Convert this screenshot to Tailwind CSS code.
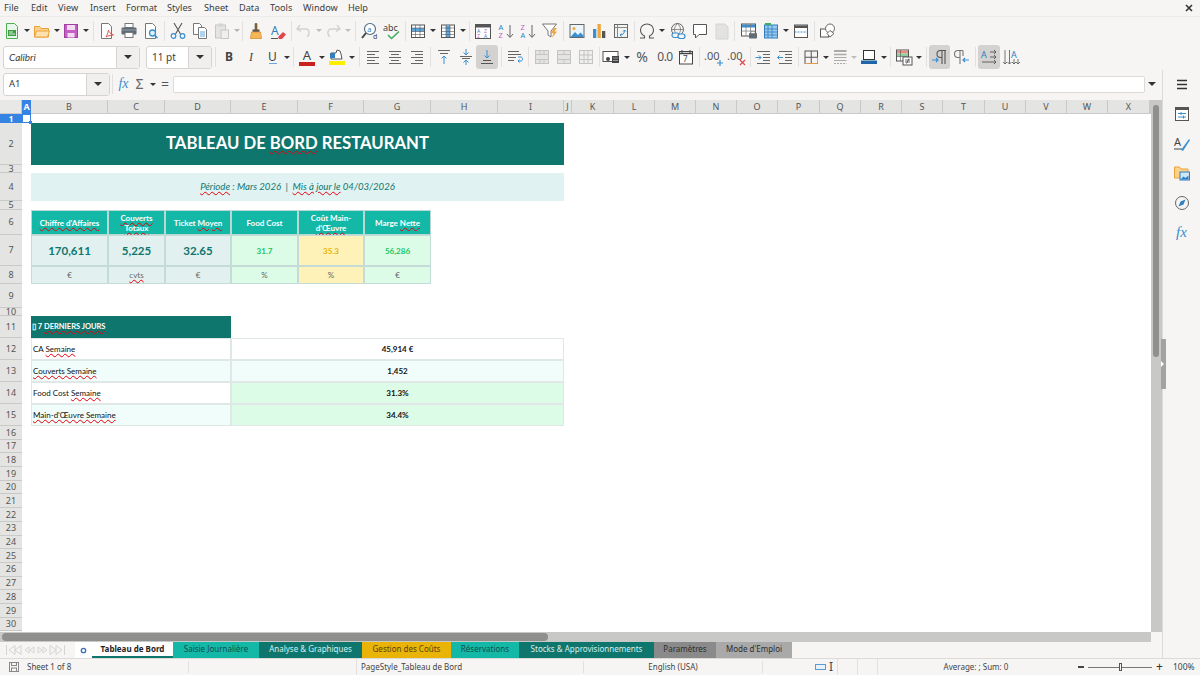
<!DOCTYPE html>
<html lang="en">
<head>
<meta charset="UTF-8">
<title>Tableau de Bord - Calc</title>
<script src="https://cdn.jsdelivr.net/npm/@tailwindcss/browser@4"></script>
</head>
<body class="m-0 overflow-hidden">
<div class="w-[1200px] h-[675px] flex flex-col overflow-hidden bg-[#f6f5f4] font-['Noto_Sans',sans-serif] text-[#3d3d3d]">

  <!-- menu -->
  <div class="h-[17px] flex items-center justify-between text-[9.2px] pl-[4px] pr-[7px] border-b border-[#ebebe9]">
    <div class="flex">
      <span class="w-[27px]">File</span><span class="w-[27px]">Edit</span><span class="w-[32px]">View</span><span class="w-[36px]">Insert</span><span class="w-[41px]">Format</span><span class="w-[37px]">Styles</span><span class="w-[35px]">Sheet</span><span class="w-[31px]">Data</span><span class="w-[33px]">Tools</span><span class="w-[45px]">Window</span><span>Help</span>
    </div>
    <svg class="w-[8px] h-[8px]" viewBox="0 0 8 8"><path d="M1 1l6 6M7 1l-6 6" stroke="#333" stroke-width="1.6"/></svg>
  </div>

  <!-- standard toolbar -->
  <div class="h-[27px] flex items-center pl-[1px]">
    <div class="w-[22px] flex justify-center"><svg class="w-[18px] h-[18px]" viewBox="0 0 18 18" fill="none"><path d="M3.500 1.500h8l3 3v12h-11z" fill="#e9f6ea" stroke="#4caf50"/><rect x="5" y="8" width="8" height="6" fill="#3f9e45"/><path d="M6 10h4M6 12h6" stroke="#fff" stroke-width=".8"/></svg></div>
    <div class="w-[8px] flex justify-center"><div class="border-x-[3px] border-t-[3px] border-x-transparent border-t-[#333]"></div></div>
    <div class="w-[22px] flex justify-center"><svg class="w-[18px] h-[18px]" viewBox="0 0 18 18" fill="none"><path d="M1.500 15V4.500h5l1.500 2h7.500V15z" fill="#fbd28c" stroke="#e9a23b"/><path d="M1.500 15l2-6h13l-2 6z" fill="#fde1ae" stroke="#e9a23b"/></svg></div>
    <div class="w-[7px] flex justify-center"><div class="border-x-[3px] border-t-[3px] border-x-transparent border-t-[#333]"></div></div>
    <div class="w-[22px] flex justify-center"><svg class="w-[18px] h-[18px]" viewBox="0 0 18 18" fill="none"><rect x="2.500" y="2.500" width="13" height="13" fill="#c55fc4" stroke="#a03fa0"/><rect x="5" y="3" width="8" height="5" fill="#f3dcf3"/><rect x="5.500" y="11" width="7" height="4.500" fill="#f3dcf3"/></svg></div>
    <div class="w-[8px] flex justify-center"><div class="border-x-[3px] border-t-[3px] border-x-transparent border-t-[#333]"></div></div>
    <div class="w-[6px] flex justify-center"><div class="w-px h-[20px] bg-[#e2e1df]"></div></div>
    <div class="w-[22px] flex justify-center"><svg class="w-[18px] h-[18px]" viewBox="0 0 18 18" fill="none"><path d="M3.500 1.500h7l3 3v12h-10z" fill="#fff" stroke="#777"/><path d="M8 15c2-3 2-6 2.500-7 .5 2 2 4 5 5-2 0-5 .5-7.500 2z" stroke="#e2574c"/></svg></div>
    <div class="w-[22px] flex justify-center"><svg class="w-[18px] h-[18px]" viewBox="0 0 18 18" fill="none"><rect x="5" y="1.500" width="8" height="4" fill="#fff" stroke="#777"/><rect x="1.500" y="5.500" width="15" height="7" rx="1" fill="#5f6b75"/><rect x="5" y="10.500" width="8" height="5" fill="#fff" stroke="#777"/><path d="M2 8h14" stroke="#8fa0ad"/></svg></div>
    <div class="w-[22px] flex justify-center"><svg class="w-[18px] h-[18px]" viewBox="0 0 18 18" fill="none"><path d="M3.500 1.500h7l3 3v12h-10z" fill="#fff" stroke="#777"/><circle cx="10.500" cy="11" r="3" fill="#dff0fb" stroke="#3a8fd0" stroke-width="1.300"/><path d="M12.500 13l3 3" stroke="#3a8fd0" stroke-width="1.500"/></svg></div>
    <div class="w-[5px] flex justify-center"><div class="w-px h-[20px] bg-[#e2e1df]"></div></div>
    <div class="w-[22px] flex justify-center"><svg class="w-[18px] h-[18px]" viewBox="0 0 18 18" fill="none"><path d="M5 1l6.500 11M13 1L6.500 12" stroke="#555" stroke-width="1.100"/><circle cx="4.500" cy="14" r="2.300" stroke="#3a8fd0" stroke-width="1.200"/><circle cx="13.500" cy="14" r="2.300" stroke="#3a8fd0" stroke-width="1.200"/></svg></div>
    <div class="w-[22px] flex justify-center"><svg class="w-[18px] h-[18px]" viewBox="0 0 18 18" fill="none"><path d="M2.500 1.500h6l2 2v9h-8z" fill="#fff" stroke="#777"/><path d="M7.500 5.500h6l2 2v9h-8z" fill="#fff" stroke="#777"/><path d="M9 10h5M9 12h5M9 14h5" stroke="#3a8fd0" stroke-width=".8"/></svg></div>
    <div class="w-[22px] flex justify-center"><svg class="w-[18px] h-[18px]" viewBox="0 0 18 18" fill="none"><rect x="2.500" y="3" width="10" height="13" fill="#e4e4e3" stroke="#c6c6c5"/><rect x="5" y="1.500" width="5" height="3" fill="#d4d4d3"/><rect x="8" y="8" width="7.500" height="8.500" fill="#efefee" stroke="#c6c6c5"/></svg></div>
    <div class="w-[7px] flex justify-center"><div class="border-x-[3px] border-t-[3px] border-x-transparent border-t-[#b5b5b5]"></div></div>
    <div class="w-[5px] flex justify-center"><div class="w-px h-[20px] bg-[#e2e1df]"></div></div>
    <div class="w-[22px] flex justify-center"><svg class="w-[18px] h-[18px]" viewBox="0 0 18 18" fill="none"><path d="M8 1.500h2V8H8z" fill="#8a6a3b" stroke="#6a5230" stroke-width=".6"/><rect x="5.500" y="7.500" width="7" height="2.500" fill="#555"/><path d="M4.500 10h9l1 6.500h-11z" fill="#f6b75a" stroke="#d98f2b" stroke-width=".8"/></svg></div>
    <div class="w-[22px] flex justify-center"><svg class="w-[18px] h-[18px]" viewBox="0 0 18 18" fill="none"><text x="2" y="13" font-size="12" fill="#2f7fc1" font-family="Noto Sans">A</text><path d="M9 15l5-5 3 2.500-4 4.500h-3z" fill="#e2464c"/><path d="M2 16.500h7" stroke="#555"/></svg></div>
    <div class="w-[4px] flex justify-center"><div class="w-px h-[20px] bg-[#e2e1df]"></div></div>
    <div class="w-[22px] flex justify-center"><svg class="w-[18px] h-[18px]" viewBox="0 0 18 18" fill="none"><path d="M5 3L2 7l4 2.500M2.500 7h8c4 0 5 5 1.500 8" stroke="#d2d2d1" stroke-width="1.400"/></svg></div>
    <div class="w-[7px] flex justify-center"><div class="border-x-[3px] border-t-[3px] border-x-transparent border-t-[#bdbdbd]"></div></div>
    <div class="w-[22px] flex justify-center"><svg class="w-[18px] h-[18px]" viewBox="0 0 18 18" fill="none"><path d="M13 3l3 4-4 2.500M15.500 7h-8c-4 0-5 5-1.500 8" stroke="#d2d2d1" stroke-width="1.400"/></svg></div>
    <div class="w-[7px] flex justify-center"><div class="border-x-[3px] border-t-[3px] border-x-transparent border-t-[#bdbdbd]"></div></div>
    <div class="w-[8px] flex justify-center"><div class="w-px h-[20px] bg-[#e2e1df]"></div></div>
    <div class="w-[22px] flex justify-center"><svg class="w-[18px] h-[18px]" viewBox="0 0 18 18" fill="none"><circle cx="9" cy="7" r="5.500" fill="#fff" stroke="#4a6a80" stroke-width="1.100"/><path d="M5 11l-4 5" stroke="#444" stroke-width="2"/><text x="6.300" y="9.500" font-size="7.500" fill="#2f7fc1" font-family="Noto Sans">a</text><text x="12" y="17" font-size="7" fill="#444" font-family="Noto Sans">d</text></svg></div>
    <div class="w-[22px] flex justify-center"><svg class="w-[18px] h-[18px]" viewBox="0 0 18 18" fill="none"><text x="0" y="9" font-size="9" fill="#444" font-family="Noto Sans">abc</text><path d="M5 13l3.500 3.500L16 9.500" stroke="#3fae5a" stroke-width="1.600"/></svg></div>
    <div class="w-[4px] flex justify-center"><div class="w-px h-[20px] bg-[#e2e1df]"></div></div>
    <div class="w-[22px] flex justify-center"><svg class="w-[18px] h-[18px]" viewBox="0 0 18 18" fill="none"><rect x="2.500" y="3" width="13" height="12.500" fill="#fff" stroke="#555"/><rect x="3" y="6" width="12" height="3.500" fill="#5aa8e0"/><path d="M2.500 6h13M2.500 9.500h13M2.500 12.500h13M6.500 3v12.500M11 3v12.500" stroke="#555" stroke-width=".6"/></svg></div>
    <div class="w-[8px] flex justify-center"><div class="border-x-[3px] border-t-[3px] border-x-transparent border-t-[#333]"></div></div>
    <div class="w-[22px] flex justify-center"><svg class="w-[18px] h-[18px]" viewBox="0 0 18 18" fill="none"><rect x="2.500" y="3" width="13" height="12.500" fill="#fff" stroke="#555"/><rect x="7" y="3.500" width="4" height="11.500" fill="#5aa8e0"/><path d="M2.500 6h13M2.500 9.500h13M2.500 12.500h13M7 3v12.500M11 3v12.500" stroke="#555" stroke-width=".6"/></svg></div>
    <div class="w-[8px] flex justify-center"><div class="border-x-[3px] border-t-[3px] border-x-transparent border-t-[#333]"></div></div>
    <div class="w-[5px] flex justify-center"><div class="w-px h-[20px] bg-[#e2e1df]"></div></div>
    <div class="w-[22px] flex justify-center"><svg class="w-[18px] h-[18px]" viewBox="0 0 18 18" fill="none"><rect x="1.500" y="2.500" width="15" height="14" fill="#fff" stroke="#555"/><rect x="2" y="3" width="14" height="2.500" fill="#555"/><text x="3" y="10.500" font-size="5" fill="#2f7fc1" font-family="Noto Sans">A</text><text x="10" y="10.500" font-size="5" fill="#c45fc4" font-family="Noto Sans">Z</text><text x="3" y="15.500" font-size="5" fill="#c45fc4" font-family="Noto Sans">Z</text><text x="10" y="15.500" font-size="5" fill="#2f7fc1" font-family="Noto Sans">A</text></svg></div>
    <div class="w-[22px] flex justify-center ml-[1px]"><svg class="w-[18px] h-[18px]" viewBox="0 0 18 18" fill="none"><text x="1.500" y="8" font-size="7.500" fill="#2f7fc1" font-family="Noto Sans">A</text><text x="1.500" y="16" font-size="7.500" fill="#c45fc4" font-family="Noto Sans">Z</text><path d="M13 3v12M10 12l3 3.500 3-3.500" stroke="#666"/></svg></div>
    <div class="w-[22px] flex justify-center"><svg class="w-[18px] h-[18px]" viewBox="0 0 18 18" fill="none"><text x="1.500" y="8" font-size="7.500" fill="#c45fc4" font-family="Noto Sans">Z</text><text x="1.500" y="16" font-size="7.500" fill="#2f7fc1" font-family="Noto Sans">A</text><path d="M13 3v12M10 12l3 3.500 3-3.500" stroke="#666"/></svg></div>
    <div class="w-[22px] flex justify-center"><svg class="w-[18px] h-[18px]" viewBox="0 0 18 18" fill="none"><path d="M1.500 2h14l-5.500 7v6l-3-2V9z" fill="#fff" stroke="#777"/><path d="M13 6l-3 5h2.500L11 16l5-6.500h-2.500L16 6z" fill="#f0a63b"/></svg></div>
    <div class="w-[5px] flex justify-center"><div class="w-px h-[20px] bg-[#e2e1df]"></div></div>
    <div class="w-[22px] flex justify-center"><svg class="w-[18px] h-[18px]" viewBox="0 0 18 18" fill="none"><rect x="2" y="2.500" width="14" height="13" fill="#eaf4fb" stroke="#666"/><circle cx="6" cy="6.500" r="1.500" fill="#f0a63b"/><path d="M2.500 15l4.500-5 3 3 2.500-2.500 3 3V15z" fill="#3a8fd0"/></svg></div>
    <div class="w-[22px] flex justify-center"><svg class="w-[18px] h-[18px]" viewBox="0 0 18 18" fill="none"><rect x="3" y="7" width="3.300" height="9" fill="#3a8fd0"/><rect x="7.500" y="2" width="3.300" height="14" fill="#f0a63b"/><rect x="12" y="9" width="3.300" height="7" fill="#555"/></svg></div>
    <div class="w-[22px] flex justify-center"><svg class="w-[18px] h-[18px]" viewBox="0 0 18 18" fill="none"><rect x="2.500" y="2.500" width="13" height="13" fill="#f3f3f2" stroke="#666"/><path d="M2.500 5.500h13M5.500 2.500v13" stroke="#888"/><path d="M8 13c3 0 4.500-1.500 4.500-5M11 9.500L12.500 8 14 9.500M9.500 11.500L8 13l1.500 1.500" stroke="#3a8fd0"/></svg></div>
    <div class="w-[4px] flex justify-center"><div class="w-px h-[20px] bg-[#e2e1df]"></div></div>
    <div class="w-[22px] flex justify-center"><svg class="w-[18px] h-[18px]" viewBox="0 0 18 18" fill="none"><path d="M2 16h4.500v-2C3.500 12.500 2.500 10.500 2.500 8c0-3.500 3-6 6.500-6s6.500 2.500 6.500 6c0 2.500-1 4.500-4 6v2H16" stroke="#555" stroke-width="1.100"/></svg></div>
    <div class="w-[8px] flex justify-center"><div class="border-x-[3px] border-t-[3px] border-x-transparent border-t-[#333]"></div></div>
    <div class="w-[22px] flex justify-center ml-[1px]"><svg class="w-[18px] h-[18px]" viewBox="0 0 18 18" fill="none"><circle cx="8.500" cy="7.500" r="6" stroke="#666"/><path d="M2.500 7.500h12M8.500 1.500c-4 4-4 8 0 12M8.500 1.500c4 4 4 8 0 12" stroke="#666" stroke-width=".7"/><rect x="3" y="11" width="7" height="4.500" rx="2.200" fill="#f6f5f4" stroke="#3a8fd0" stroke-width="1.200"/><rect x="9" y="12" width="7" height="4.500" rx="2.200" fill="#f6f5f4" stroke="#3a8fd0" stroke-width="1.200"/></svg></div>
    <div class="w-[22px] flex justify-center"><svg class="w-[18px] h-[18px]" viewBox="0 0 18 18" fill="none"><path d="M2.500 2.500h13v10H8l-3.500 3.500v-3.500h-2z" fill="#fff" stroke="#555"/></svg></div>
    <div class="w-[22px] flex justify-center"><svg class="w-[18px] h-[18px]" viewBox="0 0 18 18" fill="none"><path d="M3 2h9l3 3v12H3z" fill="#e2e2e1" stroke="#d4d4d3"/></svg></div>
    <div class="w-[3px] flex justify-center"><div class="w-px h-[20px] bg-[#e2e1df]"></div></div>
    <div class="w-[22px] flex justify-center ml-[2px]"><svg class="w-[18px] h-[18px]" viewBox="0 0 18 18" fill="none"><rect x="1.500" y="2" width="14" height="12" fill="#fff" stroke="#555"/><rect x="2" y="2.500" width="13" height="3" fill="#3a8fd0"/><path d="M1.500 9h14M6 2v12M10.500 2v12" stroke="#777" stroke-width=".7"/><rect x="9" y="11" width="8" height="5.500" rx="1" fill="#5f6b75"/><rect x="11" y="9.500" width="4" height="2" fill="#fff" stroke="#666" stroke-width=".5"/></svg></div>
    <div class="w-[22px] flex justify-center"><svg class="w-[18px] h-[18px]" viewBox="0 0 18 18" fill="none"><rect x="2.500" y="3" width="13" height="13" fill="#9ccbee" stroke="#2f7fc1"/><path d="M2.500 7h13M2.500 10h13M2.500 13h13M6 3v13M10 3v13" stroke="#2f7fc1" stroke-width=".8"/><rect x="3" y="1" width="6" height="2" fill="#3fae5a"/></svg></div>
    <div class="w-[8px] flex justify-center"><div class="border-x-[3px] border-t-[3px] border-x-transparent border-t-[#333]"></div></div>
    <div class="w-[22px] flex justify-center"><svg class="w-[18px] h-[18px]" viewBox="0 0 18 18" fill="none"><rect x="2.500" y="3" width="13" height="12.500" fill="#fff" stroke="#555"/><rect x="3" y="3.500" width="12" height="2.500" fill="#555"/><path d="M2.500 10h13" stroke="#3a8fd0" stroke-dasharray="2 1"/></svg></div>
    <div class="w-[4px] flex justify-center"><div class="w-px h-[20px] bg-[#e2e1df]"></div></div>
    <div class="w-[22px] flex justify-center ml-[1px]"><svg class="w-[18px] h-[18px]" viewBox="0 0 18 18" fill="none"><rect x="1.500" y="7" width="8" height="8" fill="#fff" stroke="#555"/><circle cx="11" cy="6.500" r="4.500" fill="#fff" stroke="#666"/><path d="M11 8.500l4 3-4 3.500-3-3.500z" fill="#fff" stroke="#666"/></svg></div>
  </div>

  <!-- formatting toolbar -->
  <div class="h-[26px] flex items-center pl-[3px]">
    <div class="w-[137px] h-[23px] flex bg-white border border-[#d5d4d2] rounded-[3px]">
      <div class="flex-1 flex items-center pl-[5px] text-[10px] italic font-['Lato',sans-serif]">Calibri</div>
      <div class="w-[23px] flex items-center justify-center bg-[#f0efed] border-l border-[#d5d4d2]"><div class="border-x-[4px] border-t-[4px] border-x-transparent border-t-[#333]"></div></div>
    </div>
    <div class="w-[66px] h-[23px] ml-[6px] flex bg-white border border-[#d5d4d2] rounded-[3px]">
      <div class="flex-1 flex items-center pl-[5px] text-[10px]">11 pt</div>
      <div class="w-[23px] flex items-center justify-center bg-[#f0efed] border-l border-[#d5d4d2]"><div class="border-x-[4px] border-t-[4px] border-x-transparent border-t-[#333]"></div></div>
    </div>
    <div class="w-[5px] ml-[1px] flex justify-center"><div class="w-px h-[20px] bg-[#e2e1df]"></div></div>
    <div class="w-[22px] text-center text-[12px] font-bold text-[#444]">B</div>
    <div class="w-[22px] text-center text-[12px] italic text-[#444] font-['Liberation_Serif',serif]">I</div>
    <div class="w-[21px] flex flex-col items-center text-[12px] leading-[13px] text-[#444]">U<div class="w-[8px] h-[1.500px] bg-[#6aa6d8]"></div></div>
    <div class="w-[8px] flex justify-center"><div class="border-x-[3px] border-t-[3px] border-x-transparent border-t-[#333]"></div></div>
    <div class="w-[5px] flex justify-center"><div class="w-px h-[20px] bg-[#e2e1df]"></div></div>
    <div class="w-[22px] flex flex-col items-center text-[13px] leading-[14px] text-[#444]">A<div class="w-[16px] h-[4px] bg-[#c9211e]"></div></div>
    <div class="w-[8px] flex justify-center"><div class="border-x-[3px] border-t-[3px] border-x-transparent border-t-[#333]"></div></div>
    <div class="w-[22px] flex justify-center"><svg class="w-[18px] h-[18px]" viewBox="0 0 18 18" fill="none"><path d="M3 11V5h5l1-3 3 1 1 3 1 5H8z" fill="#fff" stroke="#555"/><rect x="2" y="5" width="5" height="5" fill="#2f7fc1"/><rect x="1" y="13" width="16" height="4" fill="#ffee00"/></svg></div>
    <div class="w-[8px] flex justify-center"><div class="border-x-[3px] border-t-[3px] border-x-transparent border-t-[#333]"></div></div>
    <div class="w-[6px] flex justify-center"><div class="w-px h-[20px] bg-[#e2e1df]"></div></div>
    <div class="w-[22px] flex justify-center"><svg class="w-[18px] h-[18px]" viewBox="0 0 18 18" fill="none"><path d="M3 3.500h12M3 6.500h8M3 9.500h12M3 12.500h8M3 15.500h12" stroke="#666"/></svg></div>
    <div class="w-[22px] flex justify-center"><svg class="w-[18px] h-[18px]" viewBox="0 0 18 18" fill="none"><path d="M3 3.500h12M5 6.500h8M3 9.500h12M5 12.500h8M3 15.500h12" stroke="#666"/></svg></div>
    <div class="w-[22px] flex justify-center"><svg class="w-[18px] h-[18px]" viewBox="0 0 18 18" fill="none"><path d="M3 3.500h12M7 6.500h8M3 9.500h12M7 12.500h8M3 15.500h12" stroke="#666"/></svg></div>
    <div class="w-[5px] flex justify-center"><div class="w-px h-[20px] bg-[#e2e1df]"></div></div>
    <div class="w-[22px] flex justify-center"><svg class="w-[18px] h-[18px]" viewBox="0 0 18 18" fill="none"><path d="M3 2.500h12M5 5.500h8" stroke="#666"/><path d="M9 16V8M6.500 10.500L9 8l2.500 2.500" stroke="#3a8fd0"/></svg></div>
    <div class="w-[21px] flex justify-center"><svg class="w-[18px] h-[18px]" viewBox="0 0 18 18" fill="none"><path d="M3 8.500h12M5 10.500h8" stroke="#666"/><path d="M9 1v6M6.500 4.500L9 7l2.500-2.500M9 17v-5M6.500 14.500L9 12l2.500 2.500" stroke="#3a8fd0"/></svg></div>
    <div class="w-[22px] h-[24px] flex items-center justify-center bg-[#d3d2d0] rounded-[3px]"><svg class="w-[18px] h-[18px]" viewBox="0 0 18 18" fill="none"><path d="M3 15.500h12M5 12.500h8" stroke="#555"/><path d="M9 2v8M6.500 7.500L9 10l2.500-2.500" stroke="#3a8fd0"/></svg></div>
    <div class="w-[5px] ml-[1px] flex justify-center"><div class="w-px h-[20px] bg-[#e2e1df]"></div></div>
    <div class="w-[22px] flex justify-center"><svg class="w-[18px] h-[18px]" viewBox="0 0 18 18" fill="none"><path d="M2 3.500h11M2 6.500h13M2 9.500h8M2 12.500h6" stroke="#666"/><path d="M12 9h3c2 0 2 4 0 4h-3M13.500 11.500L12 13l1.500 1.500" stroke="#3a8fd0"/></svg></div>
    <div class="w-[5px] flex justify-center"><div class="w-px h-[20px] bg-[#e2e1df]"></div></div>
    <div class="w-[22px] flex justify-center"><svg class="w-[18px] h-[18px]" viewBox="0 0 18 18" fill="#e4e4e3" stroke="#c4c4c3"><rect x="2.500" y="2.500" width="13" height="13"/><path d="M2.500 6.500h13M2.500 11.500h13M7 2.500v4M11 2.500v4M7 11.500v4M11 11.500v4"/></svg></div>
    <div class="w-[22px] flex justify-center"><svg class="w-[18px] h-[18px]" viewBox="0 0 18 18" fill="#e4e4e3" stroke="#c4c4c3"><rect x="2.500" y="2.500" width="13" height="13"/><path d="M2.500 6.500h13M2.500 11.500h13M9 2.500v4M9 11.500v4"/></svg></div>
    <div class="w-[22px] flex justify-center"><svg class="w-[18px] h-[18px]" viewBox="0 0 18 18" fill="#efefee" stroke="#c4c4c3"><rect x="2.500" y="2.500" width="13" height="13"/><path d="M2.500 7h13M2.500 11.500h13M7 2.500v13M11 2.500v13"/></svg></div>
    <div class="w-[5px] flex justify-center"><div class="w-px h-[20px] bg-[#e2e1df]"></div></div>
    <div class="w-[20px] flex justify-center"><svg class="w-[20px] h-[18px]" viewBox="0 0 20 18" fill="none"><rect x="1" y="3.500" width="15" height="10" fill="#fff" stroke="#555"/><circle cx="6" cy="11" r="2" fill="#444"/><rect x="10" y="8" width="7" height="7" fill="#444"/><path d="M11 10h5M11 12.500h5" stroke="#bbb" stroke-width=".7"/></svg></div>
    <div class="w-[8px] ml-[1px] flex justify-center"><div class="border-x-[3px] border-t-[3px] border-x-transparent border-t-[#333]"></div></div>
    <div class="w-[22px] text-center text-[14px] leading-[18px] text-[#555]">%</div>
    <div class="w-[22px] ml-[1px] text-center text-[12px] leading-[18px] text-[#555] tracking-[-0.5px]">0.0</div>
    <div class="w-[20px] flex justify-center"><svg class="w-[18px] h-[18px]" viewBox="0 0 18 18" fill="none"><rect x="2.500" y="3.500" width="13" height="12.500" fill="#fff" stroke="#444"/><path d="M2.500 5.500h13" stroke="#444" stroke-width="1.500"/><path d="M5 2v3M13 2v3" stroke="#444"/><text x="6" y="14" font-size="8" fill="#444" font-family="Noto Sans">7</text></svg></div>
    <div class="w-[6px] flex justify-center"><div class="w-px h-[20px] bg-[#e2e1df]"></div></div>
    <div class="w-[23px] flex justify-center"><svg class="w-[20px] h-[18px]" viewBox="0 0 20 18" fill="none"><text x="0" y="12" font-size="11" fill="#555" font-family="Noto Sans">.00</text><path d="M13 15h6M16 12v6" stroke="#3a8fd0" stroke-width="1.200"/></svg></div>
    <div class="w-[23px] flex justify-center"><svg class="w-[20px] h-[18px]" viewBox="0 0 20 18" fill="none"><text x="0" y="12" font-size="11" fill="#555" font-family="Noto Sans">.00</text><path d="M13 12l5 5M18 12l-5 5" stroke="#e2464c" stroke-width="1.200"/></svg></div>
    <div class="w-[4px] flex justify-center"><div class="w-px h-[20px] bg-[#e2e1df]"></div></div>
    <div class="w-[22px] flex justify-center"><svg class="w-[18px] h-[18px]" viewBox="0 0 18 18" fill="none"><path d="M3 3.500h13M9 6.500h7M9 9.500h7M9 12.500h7M3 15.500h13" stroke="#666"/><path d="M1.500 9.500H7M5 7.500l2 2-2 2" stroke="#3a8fd0"/></svg></div>
    <div class="w-[22px] flex justify-center"><svg class="w-[18px] h-[18px]" viewBox="0 0 18 18" fill="none"><path d="M3 3.500h13M9 6.500h7M9 9.500h7M9 12.500h7M3 15.500h13" stroke="#666"/><path d="M7 9.500H1.500M3.500 7.500l-2 2 2 2" stroke="#3a8fd0"/></svg></div>
    <div class="w-[4px] flex justify-center"><div class="w-px h-[20px] bg-[#e2e1df]"></div></div>
    <div class="w-[22px] flex justify-center"><svg class="w-[18px] h-[18px]" viewBox="0 0 18 18" fill="none"><rect x="3" y="3" width="12.500" height="12.500" stroke="#555"/><path d="M9.250 3v12.500M3 9.250h12.500" stroke="#555"/><path d="M3 15.500h12.500v-6" stroke="#e39a4a"/></svg></div>
    <div class="w-[8px] flex justify-center"><div class="border-x-[3px] border-t-[3px] border-x-transparent border-t-[#333]"></div></div>
    <div class="w-[20px] flex justify-center"><svg class="w-[18px] h-[18px]" viewBox="0 0 18 18" fill="none"><path d="M3 3h12.500" stroke="#aaa" stroke-width="2"/><path d="M3 6.500h12.500" stroke="#aaa" stroke-width="1.500"/><path d="M3 9.500h12.500M3 12.500h12.500" stroke="#aaa"/><path d="M3 15.500h12.500" stroke="#aaa" stroke-dasharray="2 1"/></svg></div>
    <div class="w-[8px] flex justify-center"><div class="border-x-[3px] border-t-[3px] border-x-transparent border-t-[#bdbdbd]"></div></div>
    <div class="w-[22px] flex justify-center"><svg class="w-[18px] h-[18px]" viewBox="0 0 18 18" fill="none"><rect x="3.500" y="2.500" width="11" height="9" fill="#fff" stroke="#333"/><path d="M1 12.500h16v3.500H1z" fill="#1f66a8"/></svg></div>
    <div class="w-[8px] flex justify-center"><div class="border-x-[3px] border-t-[3px] border-x-transparent border-t-[#333]"></div></div>
    <div class="w-[5px] flex justify-center"><div class="w-px h-[20px] bg-[#e2e1df]"></div></div>
    <div class="w-[22px] flex justify-center"><svg class="w-[18px] h-[18px]" viewBox="0 0 18 18" fill="none"><rect x="1.500" y="2" width="12" height="11" fill="#fff" stroke="#555"/><rect x="2" y="2.500" width="11" height="3" fill="#e98a80"/><rect x="2" y="5.500" width="11" height="3" fill="#8fd19e"/><path d="M1.500 8.500h12M5.500 2v11" stroke="#555" stroke-width=".6"/><rect x="8" y="9" width="9" height="8" fill="#fff" stroke="#555"/><path d="M10 12h5M10 14h5M14 10.500l-2.500 5" stroke="#444" stroke-width=".8"/></svg></div>
    <div class="w-[8px] flex justify-center"><div class="border-x-[3px] border-t-[3px] border-x-transparent border-t-[#333]"></div></div>
    <div class="w-[6px] flex justify-center"><div class="w-px h-[20px] bg-[#e2e1df]"></div></div>
    <div class="w-[21px] h-[24px] flex items-center justify-center bg-[#d3d2d0] rounded-[3px]"><svg class="w-[18px] h-[18px]" viewBox="0 0 18 18" fill="none"><path d="M15 2.500H9.500a3.500 3.500 0 0 0 0 7H11M11 2.500V16M14 2.500V16" stroke="#555" stroke-width="1.100"/><path d="M1 12h6M5 10l2 2-2 2" stroke="#3a8fd0" stroke-width="1.200"/></svg></div>
    <div class="w-[22px] flex justify-center"><svg class="w-[18px] h-[18px]" viewBox="0 0 18 18" fill="none"><path d="M11 2.500H6a3.500 3.500 0 0 0 0 7h2M8 2.500V16M11 2.500V8" stroke="#777" stroke-width="1.100"/><path d="M17 12h-6M13 10l-2 2 2 2" stroke="#3a8fd0" stroke-width="1.200"/></svg></div>
    <div class="w-[6px] flex justify-center"><div class="w-px h-[20px] bg-[#e2e1df]"></div></div>
    <div class="w-[22px] h-[24px] flex items-center justify-center bg-[#d3d2d0] rounded-[3px]"><svg class="w-[18px] h-[18px]" viewBox="0 0 18 18" fill="none"><text x="1" y="10" font-size="9" fill="#2f7fc1" font-family="Noto Sans">A</text><path d="M10 4h6M14 2l2 2-2 2M10 9h6M14 7l2 2-2 2M2 14h14M14 12l2 2-2 2" stroke="#555" stroke-width=".9"/></svg></div>
    <div class="w-[22px] flex justify-center"><svg class="w-[18px] h-[18px]" viewBox="0 0 18 18" fill="none"><text x="9" y="10" font-size="9" fill="#2f7fc1" font-family="Noto Sans">A</text><path d="M3 2v14M1 14l2 2 2-2M7.500 2v14M5.500 14l2 2 2-2M12 11v5M10 14l2 2 2-2M16 11v5M14 14l2 2 2-2" stroke="#555" stroke-width=".8"/></svg></div>
  </div>

  <!-- middle: formula bar + sheet + tabs, deck on the right -->
  <div class="h-[588px] flex">
    <div class="w-[1162px] flex flex-col">
      <!-- formula bar -->
      <div class="h-[30px] flex items-center pl-[3px] pb-[2px]">
        <div class="w-[107px] h-[23px] flex bg-white border border-[#d5d4d2] rounded-[3px]">
          <div class="flex-1 flex items-center pl-[5px] text-[9.500px]">A1</div>
          <div class="w-[23px] flex items-center justify-center bg-[#f0efed] border-l border-[#d5d4d2]"><div class="border-x-[4px] border-t-[4px] border-x-transparent border-t-[#333]"></div></div>
        </div>
        <div class="w-[4px] flex justify-center"><div class="w-px h-[20px] bg-[#e2e1df]"></div></div>
        <div class="w-[17px] ml-[1px] text-center text-[14px] leading-[18px] italic text-[#3a8fd0] font-['Liberation_Serif',serif]">fx</div>
        <div class="w-[15px] text-center text-[14px] leading-[18px] text-[#666]">Σ</div>
        <div class="w-[11px] flex justify-center"><div class="border-x-[3px] border-t-[3px] border-x-transparent border-t-[#333]"></div></div>
        <div class="w-[14px] text-center text-[14px] leading-[18px] text-[#555]">=</div>
        <div class="w-[972px] h-[17px] ml-[1px] bg-white border border-[#dcdbd9] rounded-[2px]"></div>
        <div class="w-[14px] flex justify-center"><div class="border-x-[4px] border-t-[4px] border-x-transparent border-t-[#333]"></div></div>
      </div>

      <!-- column headers -->
      <div class="h-[14px] flex text-[9px] leading-[13px] text-[#555] text-center">
        <div class="w-[22px] bg-[#e8e8e6] border-r border-b border-[#c9c9c7]"></div>
        <div class="w-[9px] bg-[#3584e4] text-white font-bold">A</div>
        <div class="w-[77px] bg-[#e4e4e2] border-r border-b border-[#c9c9c7]">B</div>
        <div class="w-[57px] bg-[#e4e4e2] border-r border-b border-[#c9c9c7]">C</div>
        <div class="w-[66px] bg-[#e4e4e2] border-r border-b border-[#c9c9c7]">D</div>
        <div class="w-[67px] bg-[#e4e4e2] border-r border-b border-[#c9c9c7]">E</div>
        <div class="w-[66px] bg-[#e4e4e2] border-r border-b border-[#c9c9c7]">F</div>
        <div class="w-[67px] bg-[#e4e4e2] border-r border-b border-[#c9c9c7]">G</div>
        <div class="w-[67px] bg-[#e4e4e2] border-r border-b border-[#c9c9c7]">H</div>
        <div class="w-[66px] bg-[#e4e4e2] border-r border-b border-[#c9c9c7]">I</div>
        <div class="w-[8px] bg-[#e4e4e2] border-r border-b border-[#c9c9c7]">J</div>
        <div class="w-[42px] bg-[#e4e4e2] border-r border-b border-[#c9c9c7]">K</div>
        <div class="w-[41px] bg-[#e4e4e2] border-r border-b border-[#c9c9c7]">L</div>
        <div class="w-[41px] bg-[#e4e4e2] border-r border-b border-[#c9c9c7]">M</div>
        <div class="w-[41px] bg-[#e4e4e2] border-r border-b border-[#c9c9c7]">N</div>
        <div class="w-[41px] bg-[#e4e4e2] border-r border-b border-[#c9c9c7]">O</div>
        <div class="w-[42px] bg-[#e4e4e2] border-r border-b border-[#c9c9c7]">P</div>
        <div class="w-[41px] bg-[#e4e4e2] border-r border-b border-[#c9c9c7]">Q</div>
        <div class="w-[41px] bg-[#e4e4e2] border-r border-b border-[#c9c9c7]">R</div>
        <div class="w-[41px] bg-[#e4e4e2] border-r border-b border-[#c9c9c7]">S</div>
        <div class="w-[42px] bg-[#e4e4e2] border-r border-b border-[#c9c9c7]">T</div>
        <div class="w-[41px] bg-[#e4e4e2] border-r border-b border-[#c9c9c7]">U</div>
        <div class="w-[41px] bg-[#e4e4e2] border-r border-b border-[#c9c9c7]">V</div>
        <div class="w-[41px] bg-[#e4e4e2] border-r border-b border-[#c9c9c7]">W</div>
        <div class="w-[42px] bg-[#e4e4e2] border-r border-b border-[#c9c9c7]">X</div>
        <div class="w-[12px] bg-[#c8c8c7]"></div>
      </div>

      <div class="h-[518px] flex">
        <!-- row headers -->
        <div class="w-[22px] flex flex-col text-[9px] text-[#555] text-center overflow-hidden">
          <div class="h-[9px] flex items-center justify-center bg-[#3584e4] text-white font-bold text-[8px]">1</div>
          <div class="h-[42px] flex items-center justify-center bg-[#e4e4e2] border-b border-[#c9c9c7]">2</div>
          <div class="h-[8px] flex items-center justify-center bg-[#e4e4e2] border-b border-[#c9c9c7]">3</div>
          <div class="h-[28px] flex items-center justify-center bg-[#e4e4e2] border-b border-[#c9c9c7]">4</div>
          <div class="h-[9px] flex items-center justify-center bg-[#e4e4e2] border-b border-[#c9c9c7]">5</div>
          <div class="h-[25px] flex items-center justify-center bg-[#e4e4e2] border-b border-[#c9c9c7]">6</div>
          <div class="h-[31px] flex items-center justify-center bg-[#e4e4e2] border-b border-[#c9c9c7]">7</div>
          <div class="h-[18px] flex items-center justify-center bg-[#e4e4e2] border-b border-[#c9c9c7]">8</div>
          <div class="h-[24px] flex items-center justify-center bg-[#e4e4e2] border-b border-[#c9c9c7]">9</div>
          <div class="h-[8px] flex items-center justify-center bg-[#e4e4e2] border-b border-[#c9c9c7]">10</div>
          <div class="h-[22px] flex items-center justify-center bg-[#e4e4e2] border-b border-[#c9c9c7]">11</div>
          <div class="h-[22px] flex items-center justify-center bg-[#e4e4e2] border-b border-[#c9c9c7]">12</div>
          <div class="h-[22px] flex items-center justify-center bg-[#e4e4e2] border-b border-[#c9c9c7]">13</div>
          <div class="h-[22px] flex items-center justify-center bg-[#e4e4e2] border-b border-[#c9c9c7]">14</div>
          <div class="h-[22px] flex items-center justify-center bg-[#e4e4e2] border-b border-[#c9c9c7]">15</div>
          <div class="h-[13.700px] flex items-center justify-center bg-[#e4e4e2] border-b border-[#c9c9c7]">16</div>
          <div class="h-[13.700px] flex items-center justify-center bg-[#e4e4e2] border-b border-[#c9c9c7]">17</div>
          <div class="h-[13.700px] flex items-center justify-center bg-[#e4e4e2] border-b border-[#c9c9c7]">18</div>
          <div class="h-[13.700px] flex items-center justify-center bg-[#e4e4e2] border-b border-[#c9c9c7]">19</div>
          <div class="h-[13.700px] flex items-center justify-center bg-[#e4e4e2] border-b border-[#c9c9c7]">20</div>
          <div class="h-[13.700px] flex items-center justify-center bg-[#e4e4e2] border-b border-[#c9c9c7]">21</div>
          <div class="h-[13.700px] flex items-center justify-center bg-[#e4e4e2] border-b border-[#c9c9c7]">22</div>
          <div class="h-[13.700px] flex items-center justify-center bg-[#e4e4e2] border-b border-[#c9c9c7]">23</div>
          <div class="h-[13.700px] flex items-center justify-center bg-[#e4e4e2] border-b border-[#c9c9c7]">24</div>
          <div class="h-[13.700px] flex items-center justify-center bg-[#e4e4e2] border-b border-[#c9c9c7]">25</div>
          <div class="h-[13.700px] flex items-center justify-center bg-[#e4e4e2] border-b border-[#c9c9c7]">26</div>
          <div class="h-[13.700px] flex items-center justify-center bg-[#e4e4e2] border-b border-[#c9c9c7]">27</div>
          <div class="h-[13.700px] flex items-center justify-center bg-[#e4e4e2] border-b border-[#c9c9c7]">28</div>
          <div class="h-[13.700px] flex items-center justify-center bg-[#e4e4e2] border-b border-[#c9c9c7]">29</div>
          <div class="h-[13.700px] flex items-center justify-center bg-[#e4e4e2] border-b border-[#c9c9c7]">30</div>
        </div>

        <!-- cells -->
        <div class="w-[1129px] bg-white relative font-['Lato',sans-serif]">
          <div class="absolute left-0 top-0 w-[9px] h-[9px] border border-[#3584e4]"><div class="absolute right-[-2px] bottom-[-2px] w-[3px] h-[3px] bg-[#3584e4]"></div></div>
          <div class="grid grid-cols-[9px_77px_57px_66px_67px_66px_67px_67px_66px] grid-rows-[9px_42px_8px_28px_9px_25px_31px_18px_24px_8px_22px_22px_22px_22px_22px]">
            <div class="col-start-2 col-span-8 row-start-2 flex items-center justify-center bg-[#0f766e] text-white font-bold text-[16.7px]"><span>TABLEAU DE <span class="underline underline-offset-[1px] decoration-wavy decoration-red-600 decoration-1">BORD</span> RESTAURANT</span></div>
            <div class="col-start-2 col-span-8 row-start-4 flex items-center justify-center bg-[#e0f2f1] text-[#0f766e] italic text-[9.6px] whitespace-pre"><span><span class="underline underline-offset-[1px] decoration-wavy decoration-red-600 decoration-1">Période</span> : Mars 2026  |  <span class="underline underline-offset-[1px] decoration-wavy decoration-red-600 decoration-1">Mis à jour le</span> 04/03/2026</span></div>

            <div class="col-start-2 row-start-6 flex items-center justify-center text-center bg-[#14b8a6] text-white font-bold text-[8px] leading-[10px] border border-[#b8d8d4]"><span class="underline underline-offset-[1px] decoration-wavy decoration-red-600 decoration-1">Chiffre d'Affaires</span></div>
            <div class="col-start-3 row-start-6 flex items-center justify-center text-center bg-[#14b8a6] text-white font-bold text-[8px] leading-[10px] border border-[#b8d8d4] px-[6px]"><span class="underline underline-offset-[1px] decoration-wavy decoration-red-600 decoration-1">Couverts Totaux</span></div>
            <div class="col-start-4 row-start-6 flex items-center justify-center text-center bg-[#14b8a6] text-white font-bold text-[8px] leading-[10px] border border-[#b8d8d4]"><span>Ticket <span class="underline underline-offset-[1px] decoration-wavy decoration-red-600 decoration-1">Moyen</span></span></div>
            <div class="col-start-5 row-start-6 flex items-center justify-center text-center bg-[#14b8a6] text-white font-bold text-[8px] leading-[10px] border border-[#b8d8d4]">Food Cost</div>
            <div class="col-start-6 row-start-6 flex items-center justify-center text-center bg-[#14b8a6] text-white font-bold text-[8px] leading-[10px] border border-[#b8d8d4]"><span>Coût Main-<br><span class="underline underline-offset-[1px] decoration-wavy decoration-red-600 decoration-1">d'Œuvre</span></span></div>
            <div class="col-start-7 row-start-6 flex items-center justify-center text-center bg-[#14b8a6] text-white font-bold text-[8px] leading-[10px] border border-[#b8d8d4]"><span>Marge <span class="underline underline-offset-[1px] decoration-wavy decoration-red-600 decoration-1">Nette</span></span></div>

            <div class="col-start-2 row-start-7 flex items-center justify-center bg-[#e2f1ef] text-[#0f766e] font-bold text-[11.500px] border border-[#c4dbd8]">170,611</div>
            <div class="col-start-3 row-start-7 flex items-center justify-center bg-[#e2f1ef] text-[#0f766e] font-bold text-[11.500px] border border-[#c4dbd8]">5,225</div>
            <div class="col-start-4 row-start-7 flex items-center justify-center bg-[#e2f1ef] text-[#0f766e] font-bold text-[11.500px] border border-[#c4dbd8]">32.65</div>
            <div class="col-start-5 row-start-7 flex items-center justify-center bg-[#dcfce7] text-[#22c55e] font-bold text-[8px] border border-[#c4dbd8]">31.7</div>
            <div class="col-start-6 row-start-7 flex items-center justify-center bg-[#fef2b8] text-[#eab308] font-bold text-[8px] border border-[#c4dbd8]">35.3</div>
            <div class="col-start-7 row-start-7 flex items-center justify-center bg-[#dcfce7] text-[#22c55e] font-bold text-[8px] border border-[#c4dbd8]">56,286</div>

            <div class="col-start-2 row-start-8 flex items-center justify-center bg-[#e2f1ef] text-[#666] text-[8px] border border-[#c4dbd8]">€</div>
            <div class="col-start-3 row-start-8 flex items-center justify-center bg-[#e2f1ef] text-[#666] text-[8px] border border-[#c4dbd8]"><span class="underline underline-offset-[1px] decoration-wavy decoration-red-600 decoration-1">cvts</span></div>
            <div class="col-start-4 row-start-8 flex items-center justify-center bg-[#e2f1ef] text-[#666] text-[8px] border border-[#c4dbd8]">€</div>
            <div class="col-start-5 row-start-8 flex items-center justify-center bg-[#dcfce7] text-[#666] text-[8px] border border-[#c4dbd8]">%</div>
            <div class="col-start-6 row-start-8 flex items-center justify-center bg-[#fef2b8] text-[#666] text-[8px] border border-[#c4dbd8]">%</div>
            <div class="col-start-7 row-start-8 flex items-center justify-center bg-[#dcfce7] text-[#666] text-[8px] border border-[#c4dbd8]">€</div>

            <div class="col-start-2 col-span-3 row-start-11 flex items-center pl-[1px] bg-[#0f766e] text-white font-bold text-[7.5px]"><span>▯ 7 <span class="underline underline-offset-[1px] decoration-wavy decoration-red-600 decoration-1">DERNIERS JOURS</span></span></div>

            <div class="col-start-2 col-span-3 row-start-12 flex items-center pl-[1px] bg-white text-[#111] text-[8px] border border-[#dfe8e6]"><span>CA <span class="underline underline-offset-[1px] decoration-wavy decoration-red-600 decoration-1">Semaine</span></span></div>
            <div class="col-start-5 col-span-5 row-start-12 flex items-center justify-center bg-white text-[#111] font-bold text-[8px] border border-[#dfe8e6]">45,914 €</div>
            <div class="col-start-2 col-span-3 row-start-13 flex items-center pl-[1px] bg-[#f0fdfa] text-[#111] text-[8px] border border-[#dfe8e6]"><span class="underline underline-offset-[1px] decoration-wavy decoration-red-600 decoration-1">Couverts Semaine</span></div>
            <div class="col-start-5 col-span-5 row-start-13 flex items-center justify-center bg-[#f0fdfa] text-[#111] font-bold text-[8px] border border-[#dfe8e6]">1,452</div>
            <div class="col-start-2 col-span-3 row-start-14 flex items-center pl-[1px] bg-white text-[#111] text-[8px] border border-[#dfe8e6]"><span>Food Cost <span class="underline underline-offset-[1px] decoration-wavy decoration-red-600 decoration-1">Semaine</span></span></div>
            <div class="col-start-5 col-span-5 row-start-14 flex items-center justify-center bg-[#dcfce7] text-[#111] font-bold text-[8px] border border-[#dfe8e6]">31.3%</div>
            <div class="col-start-2 col-span-3 row-start-15 flex items-center pl-[1px] bg-[#f0fdfa] text-[#111] text-[8px] border border-[#dfe8e6]"><span class="underline underline-offset-[1px] decoration-wavy decoration-red-600 decoration-1">Main-d'Œuvre Semaine</span></div>
            <div class="col-start-5 col-span-5 row-start-15 flex items-center justify-center bg-[#dcfce7] text-[#111] font-bold text-[8px] border border-[#dfe8e6]">34.4%</div>
          </div>
        </div>

        <!-- vertical scrollbar -->
        <div class="w-[11px] bg-[#c8c8c7] relative">
          <div class="absolute left-[2px] top-[-9px] w-[6px] h-[252px] rounded-[3px] bg-[#8f8f8e]"></div>
          <div class="absolute left-[10px] top-[225px] w-[5px] h-[50px] bg-[#a3a3a2] z-10 flex items-center"><div class="border-y-[3px] border-l-[3px] border-y-transparent border-l-white"></div></div>
        </div>
      </div>

      <!-- horizontal scrollbar -->
      <div class="h-[10px] flex">
        <div class="w-[1151px] bg-[#c8c8c7] pl-[2px] py-[1px]"><div class="w-[546px] h-[8px] rounded-[4px] bg-[#8f8f8e]"></div></div>
        <div class="flex-1 bg-[#f6f5f4]"></div>
      </div>

      <!-- sheet tabs -->
      <div class="h-[16px] flex items-stretch text-[8px] leading-[14px]">
        <div class="w-[75px] flex items-center pl-[5px]"><svg class="w-[61px] h-[12px]" viewBox="0 0 61 12" fill="none" stroke="#d4d4d2"><path d="M1.500 1v10M10 1.500L4 6l6 4.500zM16 1.500L10 6l6 4.500z"/><path d="M24 3l-4 3 4 3zM29 3l-4 3 4 3zM33 3l4 3-4 3zM38 3l4 3-4 3z"/><path d="M45 1.500l6 4.500-6 4.500zM51 1.500l6 4.500-6 4.500zM59.500 1v10"/></svg></div>
        <div class="w-[17px] flex items-center justify-center bg-white"><svg class="w-[7px] h-[7px]" viewBox="0 0 8 8"><circle cx="4" cy="4" r="2.500" fill="none" stroke="#3a6fb0" stroke-width="1.500"/></svg></div>
        <div class="w-[81px] text-center bg-white text-[#222] font-bold border-b-2 border-[#0f766e]">Tableau de Bord</div>
        <div class="w-[86px] text-center bg-[#14b8a6] text-[#134e4a]">Saisie Journalière</div>
        <div class="w-[103px] text-center bg-[#0f766e] text-[#d8efec]">Analyse &amp; Graphiques</div>
        <div class="w-[89px] text-center bg-[#eab308] text-[#57450a]">Gestion des Coûts</div>
        <div class="w-[68px] text-center bg-[#14b8a6] text-[#134e4a]">Réservations</div>
        <div class="w-[135px] text-center bg-[#0f766e] text-[#d8efec]">Stocks &amp; Approvisionnements</div>
        <div class="w-[62px] text-center bg-[#8a8a8a] text-[#2e2e2e]">Paramètres</div>
        <div class="w-[76px] text-center bg-[#a9a9a9] text-[#2e2e2e]">Mode d'Emploi</div>
      </div>
    </div>

    <!-- deck -->
    <div class="w-[38px] border-l border-[#dcdbd9] flex flex-col items-center pt-[6px] gap-[11.4px]">
      <svg class="w-[18px] h-[18px]" viewBox="0 0 18 18" fill="none"><path d="M4 4.500h10M4 8.500h10M4 12.500h10" stroke="#333" stroke-width="1.500"/></svg>
      <svg class="w-[18px] h-[18px]" viewBox="0 0 18 18" fill="none"><rect x="2.500" y="2.500" width="13" height="13" fill="#fff" stroke="#555"/><rect x="3" y="3" width="12" height="2" fill="#555"/><path d="M5 8.500h8M5 12h8" stroke="#3a8fd0"/><path d="M8 7v3M10.500 10.500v3" stroke="#3a8fd0"/></svg>
      <svg class="w-[18px] h-[18px]" viewBox="0 0 18 18" fill="none"><text x="1" y="11" font-size="11" fill="#444" font-family="Noto Sans">A</text><path d="M1 14h8" stroke="#444"/><path d="M8 15l8-11 1 1-7 11z" fill="#3a8fd0"/></svg>
      <svg class="w-[18px] h-[18px]" viewBox="0 0 18 18" fill="none"><path d="M1.500 14V3h5l1.500 2h7v9z" fill="#fbd28c" stroke="#e9a23b"/><rect x="7" y="8" width="9.500" height="8" fill="#cfe6f7" stroke="#2f7fc1"/><path d="M7.500 15.500l3-3 2 1.500 3-2.500v4z" fill="#2f7fc1"/></svg>
      <svg class="w-[18px] h-[18px]" viewBox="0 0 18 18" fill="none"><circle cx="9" cy="9" r="6.500" stroke="#666"/><path d="M12.500 5.500l-2 5-5 2 2-5z" fill="#2f7fc1"/></svg>
      <div class="h-[18px] w-[18px] text-center text-[15px] leading-[18px] italic text-[#3a8fd0] font-['Liberation_Serif',serif]">fx</div>
    </div>
  </div>

  <!-- status bar -->
  <div class="h-[17px] flex items-center text-[8px] text-[#444] border-t border-[#dcdbd9] whitespace-nowrap">
    <div class="w-[27px] flex justify-center"><svg class="w-[12px] h-[12px]" viewBox="0 0 12 12" fill="none"><rect x="1.500" y="1.500" width="9" height="9" stroke="#888"/><rect x="3.500" y="1.500" width="5" height="3" stroke="#888"/><rect x="3.500" y="7" width="5" height="3.500" stroke="#888"/></svg></div>
    <div class="w-[162px] border-r border-[#e2e1df]">Sheet 1 of 8</div>
    <div class="w-[168px] border-r border-[#e2e1df] h-full"></div>
    <div class="w-[227px] pl-[4px] border-r border-[#e2e1df]">PageStyle_Tableau de Bord</div>
    <div class="w-[179px] text-center border-r border-[#e2e1df]">English (USA)</div>
    <div class="w-[45px]"></div>
    <div class="w-[30px] flex items-center gap-[3px] pl-[7px] border-r border-[#e2e1df] h-full"><div class="w-[11px] h-[6px] border border-[#5a9bd0] bg-[#e8f2fa]"></div><div class="text-[12px] leading-[12px] text-[#444]">I</div></div>
    <div class="w-[20px] border-r border-[#e2e1df] h-full"></div>
    <div class="w-[20px] border-r border-[#e2e1df] h-full"></div>
    <div class="w-[196px] text-center">Average: ; Sum: 0</div>
    <div class="w-[4px]"></div>
    <div class="w-[6px] h-[1.500px] bg-[#444]"></div>
    <div class="w-[64px] h-px mx-[4px] bg-[#777] flex justify-center items-center"><div class="w-[3px] h-[8px] bg-[#f6f5f4] border border-[#555]"></div></div>
    <div class="w-[9px] text-[12px] leading-[12px] text-[#333]">+</div>
    <div class="ml-[8px] text-[8.5px]">100%</div>
  </div>
</div>
</body>
</html>
